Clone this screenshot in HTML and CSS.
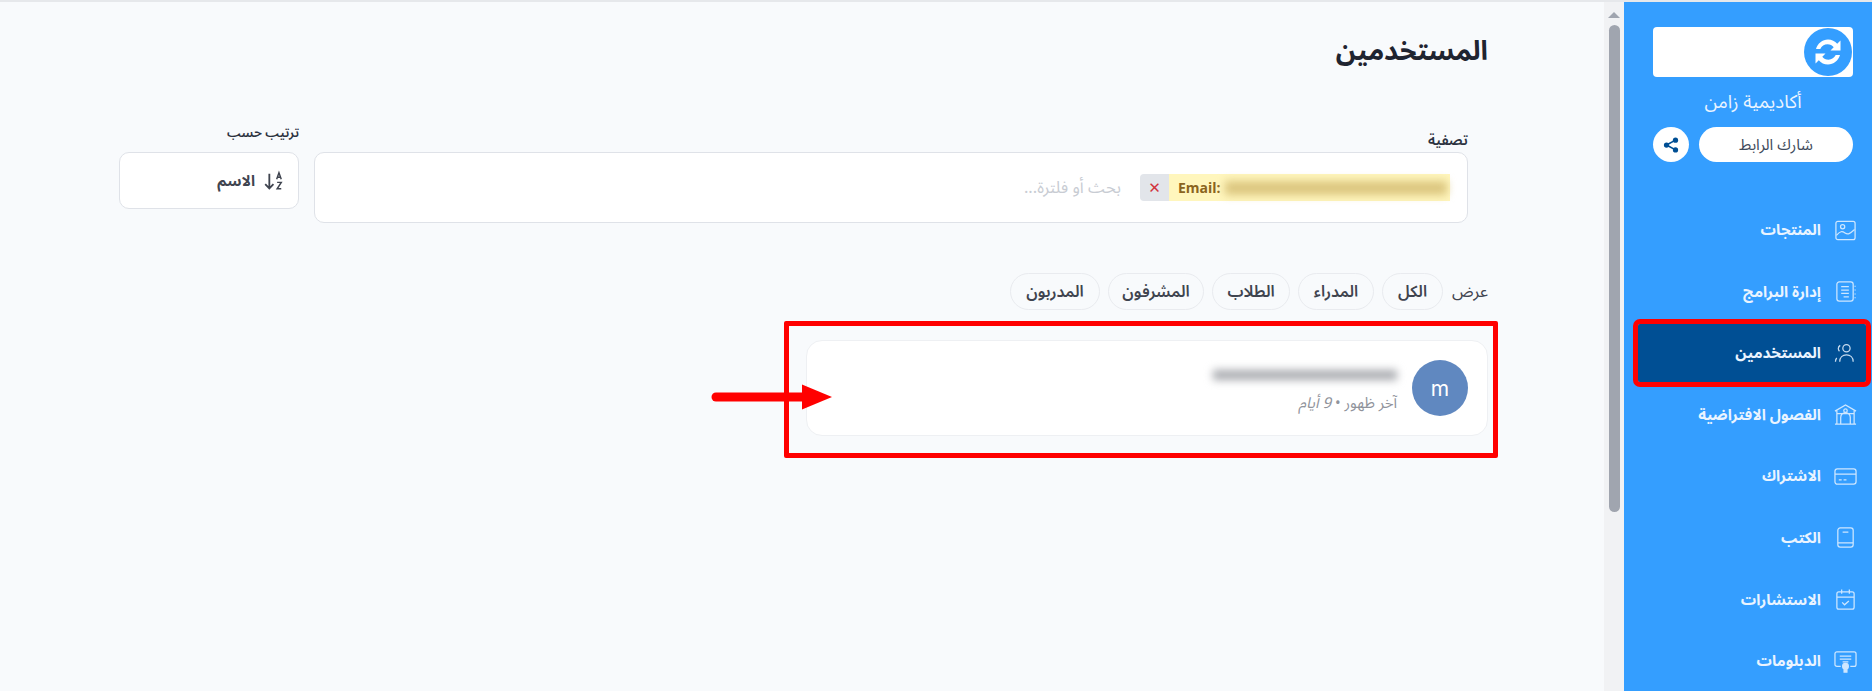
FILE: index.html
```html
<!doctype html>
<html lang="ar" dir="rtl">
<head>
<meta charset="utf-8">
<meta name="viewport" content="width=device-width, initial-scale=1">
<title>المستخدمين</title>
<link rel="stylesheet" href="styles.css">
</head>

<body>
<div class="app">

	<aside class="sidebar">
		<div class="logo">
			<svg class="logo-mark" viewBox="0 0 48 48">
				<circle cx="24" cy="24" r="24" fill="#349eff"/>
				<path d="M12 21c1.500-5.500 6.500-9.500 12-9.500 3.800 0 7 1.600 9.200 4.300l3.300-3.300v10h-10l3.200-3.200c-1.400-1.800-3.600-3-6.200-3-3.200 0-6 2-7.200 4.700z" fill="#fff"/>
				<path d="M36 27c-1.500 5.500-6.500 9.500-12 9.500-3.800 0-7-1.600-9.200-4.300l-3.300 3.300v-10h10l-3.200 3.200c1.400 1.800 3.600 3 6.200 3 3.200 0 6-2 7.200-4.700z" fill="#fff"/>
			</svg>
		</div>
		<div class="academy">أكاديمية زامن</div>
		<div class="share">
			<button class="share-link">شارك الرابط</button>
			<span class="share-icon">
				<svg viewBox="0 0 24 24" width="18" height="18" fill="#004f94">
					<circle cx="18" cy="5.500" r="3.500"/><circle cx="6" cy="12" r="3.500"/><circle cx="18" cy="18.500" r="3.500"/>
					<path d="M6 12 18 5.500M6 12l12 6.500" stroke="#004f94" stroke-width="2.200"/>
				</svg>
			</span>
		</div>

		<nav class="nav">
			<a class="nav-item">
				<svg viewBox="0 0 24 24"><rect x="2" y="2.500" width="20" height="19" rx="2"/><circle cx="9" cy="8" r="2.200"/><path d="M2.500 17c4-4.500 6-4.500 9-2.500s5 1 10-3.500"/></svg>
				<span>المنتجات</span>
			</a>
			<a class="nav-item">
				<svg viewBox="0 0 24 24"><rect x="3" y="2" width="17" height="20" rx="2.500"/><path d="M7.500 7h8M7.500 10.500h8M7.500 14h8M10 17.500h5.500M22 6v1M22 10v1M22 14v1M22 18v1"/></svg>
				<span>إدارة البرامج</span>
			</a>
			<a class="nav-item active">
				<svg viewBox="0 0 24 24"><circle cx="13" cy="6.500" r="3.800"/><path d="M6 20.500c0-4.500 3-7 7-7s7 2.500 7 7M6.500 3.500c-1.300.8-2 2-2 3.300 0 1 .4 2 1.200 2.800M1.500 20.500c0-1.500.5-2.800 1.400-3.800"/></svg>
				<span>المستخدمين</span>
			</a>
			<a class="nav-item">
				<svg viewBox="0 0 24 24"><path d="M1 8.500 12 2l11 6.500M3 8v14h18V8M1 22h22M7 22v-7a5 5 0 0 1 10 0v7M3 11h18"/><circle cx="12" cy="8" r="1.800"/></svg>
				<span>الفصول الافتراضية</span>
			</a>
			<a class="nav-item">
				<svg viewBox="0 0 24 24"><rect x="1" y="4" width="22" height="16" rx="2.500"/><path d="M1 9.500h22M5 15.500h3M10 15.500h3"/></svg>
				<span>الاشتراك</span>
			</a>
			<a class="nav-item">
				<svg viewBox="0 0 24 24"><rect x="4" y="2" width="16" height="20" rx="2.500"/><path d="M4 17.500h16M9 6.500h6"/></svg>
				<span>الكتب</span>
			</a>
			<a class="nav-item">
				<svg viewBox="0 0 24 24"><rect x="3" y="4" width="18" height="18" rx="2"/><path d="M3 9.500h18M8 1.500V6M16 1.500V6M8.500 15l2.500 2.500 4.500-4"/></svg>
				<span>الاستشارات</span>
			</a>
			<a class="nav-item">
				<svg viewBox="0 0 24 24"><path d="M7 17H3a2 2 0 0 1-2-2V4a2 2 0 0 1 2-2h18a2 2 0 0 1 2 2v11a2 2 0 0 1-2 2h-4M6 6.500h12M6 9.500h12M9 12.500h6"/><circle cx="12" cy="17" r="3" fill="currentColor"/><path d="M10.500 20v3h3v-3" fill="currentColor"/></svg>
				<span>الدبلومات</span>
			</a>
		</nav>
	</aside>

	<div class="scrollbar">
		<div class="scroll-arrow"></div>
		<div class="scroll-thumb"></div>
	</div>

	<main class="main">
		<h1 class="title">المستخدمين</h1>

		<div class="filters">
			<div class="filter-group">
				<label class="filter-label">تصفية</label>
				<div class="filter-box">
					<span class="chip">
						<span class="chip-text">
							<i class="blur-mail"></i>
							<b>Email:</b>
						</span>
						<span class="chip-x">✕</span>
					</span>
					<span class="placeholder">بحث أو فلترة...</span>
				</div>
			</div>
			<div class="sort-group">
				<label class="sort-label">ترتيب حسب</label>
				<div class="sort-box">
					<svg viewBox="0 0 24 24" width="22" height="22" fill="none" stroke="#3f444f" stroke-width="2">
						<path d="M8 4v16M3.500 15.500 8 20l4.500-4.500"/>
						<path d="M16 10l2.500-7 2.500 7M17 8h3M16.500 13.500h4.500L16.500 20.500H21" stroke-width="1.600"/>
					</svg>
					<span>الاسم</span>
				</div>
			</div>
		</div>

		<div class="tabs">
			<span class="tabs-label">عرض</span>
			<button class="tab tab-all">الكل</button>
			<button class="tab tab-managers">المدراء</button>
			<button class="tab tab-students">الطلاب</button>
			<button class="tab tab-supervisors">المشرفون</button>
			<button class="tab tab-trainers">المدربون</button>
		</div>

		<div class="user-card">
			<div class="avatar">m</div>
			<div class="user-info">
				<i class="blur-name"></i>
				<div class="last-seen">آخر ظهور • <em>9 أيام</em></div>
			</div>
		</div>
	</main>

</div>

<!-- annotations drawn over the screenshot -->
<div class="mark-box"></div>
<svg class="mark-arrow" width="124" height="30" viewBox="0 0 124 30">
	<path d="M6 15H100" stroke="#f00" stroke-width="9" stroke-linecap="round"/>
	<path d="M92 2.500 122 15 92 27.500z" fill="#f00"/>
</svg>
</body>
</html>
```

FILE: styles.css
```css
*{
	box-sizing:border-box;
	}
html,body{
	margin:0;
	height:100%;
	overflow:hidden;
	}
body{
	background-color:#f8fafc;
	color:#1f2430;
	font-family:"Noto Sans Arabic","IBM Plex Sans Arabic","DejaVu Sans","Noto Sans",sans-serif;
	}
.app{
	display:flex;
	height:691px;
	border-top:2px solid #e6e8eb;
	}

/* sidebar */
.sidebar{
	width:248px;
	flex:none;
	background-color:#349eff;
	color:#eaf4ff;
	padding:25px 19px 0 0;
	overflow:hidden;
	}
.logo{
	width:200px;
	height:50px;
	background-color:#fff;
	border-radius:4px;
	display:flex;
	align-items:center;
	padding-right:1px;
	}
.logo-mark{
	width:48px;
	height:48px;
	}
.academy{
	width:200px;
	text-align:center;
	font-size:18.500px;
	line-height:24px;
	margin-top:14px;
	}
.share{
	width:200px;
	display:flex;
	gap:10px;
	margin-top:12px;
	}
.share-link{
	flex:1;
	height:35px;
	border:none;
	border-radius:18px;
	background-color:#fff;
	color:#3f4b5c;
	font:inherit;
	font-size:15.500px;
	}
.share-icon{
	width:36px;
	height:35px;
	border-radius:50%;
	background-color:#fff;
	display:flex;
	align-items:center;
	justify-content:center;
	}
.nav{
	margin:39px -13px 0 14px;
	}
.nav-item{
	height:58px;
	margin-bottom:3.6px;
	display:flex;
	align-items:center;
	gap:13px;
	padding-right:9px;
	border-radius:2px;
	font-size:15.200px;
	font-weight:700;
	}
.nav-item svg{
	width:23px;
	height:23px;
	flex:none;
	fill:none;
	stroke:currentColor;
	stroke-width:1.300;
	opacity:.85;
	}
.nav-item.active{
	background-color:#004f94;
	outline:5px solid #f00;
	}

/* fake page scrollbar */
.scrollbar{
	width:20px;
	flex:none;
	background-color:#f1f2f4;
	padding:10px 4px 0 5px;
	}
.scroll-arrow{
	width:0;
	height:0;
	margin:0 auto;
	border-left:6px solid transparent;
	border-right:6px solid transparent;
	border-bottom:6px solid #a0a5af;
	}
.scroll-thumb{
	height:487px;
	margin-top:7px;
	background-color:#a0a5af;
	border-radius:6px;
	}

/* main area */
.main{
	flex:1;
	min-width:0;
	padding:30px 116px 0 0;
	}
.title{
	margin:0;
	height:40px;
	line-height:40px;
	font-size:27px;
	font-weight:700;
	color:#1f2430;
	}
.filters{
	display:flex;
	gap:15px;
	margin-top:52px;
	padding-right:20px;
	align-items:flex-start;
	}
.filter-group{
	width:1154px;
	}
.filter-label{
	display:block;
	height:28px;
	padding-top:6px;
	line-height:22px;
	font-size:14.500px;
	font-weight:600;
	color:#2c3240;
	}
.filter-box{
	height:71px;
	background-color:#fff;
	border:1px solid #dfe2e8;
	border-radius:10px;
	display:flex;
	align-items:center;
	gap:19px;
	padding-right:17px;
	}
.chip{
	display:flex;
	height:27px;
	direction:rtl;
	}
.chip-text{
	display:flex;
	align-items:center;
	gap:4px;
	width:281px;
	padding-left:9px;
	direction:ltr;
	justify-content:flex-start;
	flex-direction:row-reverse;
	background-color:#fff6bd;
	font-family:"Open Sans",sans-serif;
	font-size:14px;
	color:#8a6420;
	}
.blur-mail{
	flex:1;
	height:14px;
	background-color:#dcc67f;
	filter:blur(4px);
	margin-right:3px;
	}
.chip-x{
	width:29px;
	background-color:#e2e5ea;
	color:#d1343f;
	border-top-left-radius:4px;
	border-bottom-left-radius:4px;
	display:flex;
	align-items:center;
	justify-content:center;
	font-family:"DejaVu Sans",sans-serif;
	font-size:15px;
	font-weight:700;
	}
.placeholder{
	font-size:16.500px;
	color:#c8ccd3;
	}
.sort-group{
	width:180px;
	}
.sort-label{
	display:block;
	height:28px;
	line-height:18px;
	font-size:13px;
	font-weight:600;
	color:#2c3240;
	}
.sort-box{
	height:57px;
	background-color:#fff;
	border:1px solid #dfe2e8;
	border-radius:10px;
	display:flex;
	align-items:center;
	gap:7px;
	padding:0 14px 0 0;
	font-size:15px;
	font-weight:700;
	color:#3f444f;
	}
.tabs{
	display:flex;
	align-items:center;
	margin-top:50px;
	height:37px;
	gap:8px;
	}
.tabs-label{
	width:37px;
	font-size:16.500px;
	color:#3f444f;
	}
.tab{
	height:37px;
	padding:0;
	border:1px solid #e9ebef;
	border-radius:19px;
	background-color:#f8fafc;
	color:#3f444f;
	font:inherit;
	font-size:16px;
	font-weight:600;
	}
.tab-all{width:61px;}
.tab-managers{width:76px;}
.tab-students{width:78px;}
.tab-supervisors{width:96px;}
.tab-trainers{width:90px;}
.user-card{
	width:682px;
	height:96px;
	margin-top:30px;
	background-color:#fff;
	border:1px solid #eef0f3;
	border-radius:16px;
	display:flex;
	align-items:center;
	gap:15px;
	padding-right:19px;
	}
.avatar{
	width:56px;
	height:56px;
	border-radius:50%;
	background-color:#6088c0;
	color:#fff;
	font-family:"Inter",sans-serif;
	font-size:21px;
	display:flex;
	align-items:center;
	justify-content:center;
	}
.user-info{
	display:flex;
	flex-direction:column;
	gap:14px;
	padding-top:6px;
	}
.blur-name{
	display:block;
	width:184px;
	height:10px;
	background-color:#a8aaaf;
	filter:blur(4px);
	}
.last-seen{
	font-size:15px;
	line-height:18px;
	color:#8f939b;
	}
.last-seen em{
	font-style:italic;
	}

/* red annotations */
.mark-box{
	position:absolute;
	left:784px;
	top:321px;
	width:714px;
	height:137px;
	border:5px solid #f00;
	border-radius:2px;
	}
.mark-arrow{
	position:absolute;
	left:710px;
	top:382px;
	}
```
